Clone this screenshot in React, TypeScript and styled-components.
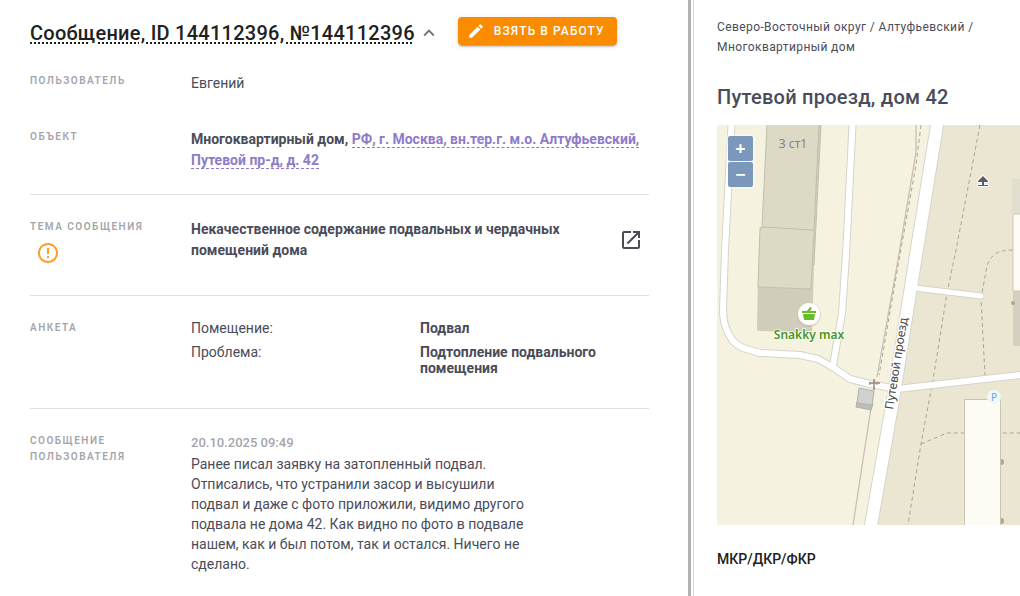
import React from 'react';
import styled, { createGlobalStyle } from 'styled-components';
import { MdEdit, MdErrorOutline, MdExpandLess, MdOpenInNew } from 'react-icons/md';

const GlobalStyle = createGlobalStyle`
  *, *::before, *::after { box-sizing: border-box; }
  body {
    margin: 0;
    background: #fff;
    color: #4a4c5a;
    font-family: Roboto, "Liberation Sans", sans-serif;
    font-size: 14px;
  }
  h1, h2, h3, p, dl, dd { margin: 0; }
`;

const Page = styled.div`
  display: grid;
  grid-template-columns: minmax(0, 688fr) minmax(0, 332fr);
  min-height: 100vh;
  overflow: hidden;
`;

const Details = styled.main`
  padding: 16px 39px 16px 30px;
`;

const Header = styled.header`
  display: flex;
  align-items: center;
  height: 34px;
  margin-bottom: 23px;
`;

const Title = styled.h1`
  font-size: 20px;
  line-height: 32px;
  font-weight: 500;
  letter-spacing: 0.0125em;
  color: #212121;
  white-space: nowrap;
  text-decoration: underline dotted 2px;
  text-underline-offset: 2px;
`;

const IconButton = styled.button<{ $size: number; $color: string }>`
  display: flex;
  flex: none;
  align-items: center;
  justify-content: center;
  width: ${(p) => p.$size}px;
  height: ${(p) => p.$size}px;
  padding: 0;
  border: 0;
  border-radius: 50%;
  background: none;
  color: ${(p) => p.$color};
  cursor: pointer;
`;

const TakeButton = styled.button`
  display: flex;
  flex: none;
  align-items: center;
  gap: 9px;
  height: 28px;
  margin: 0 0 4px 15px;
  padding: 0 12px 0 9px;
  border: 0;
  border-radius: 4px;
  background: #fb8c00;
  color: #fff;
  font: 500 12px/20px Roboto, "Liberation Sans", sans-serif;
  letter-spacing: 0.09em;
  text-transform: uppercase;
  white-space: nowrap;
  box-shadow: 0 3px 1px -2px rgba(0, 0, 0, 0.2), 0 2px 2px rgba(0, 0, 0, 0.14),
    0 1px 5px rgba(0, 0, 0, 0.12);
  cursor: pointer;
`;

const Section = styled.section`
  padding: 24px 0 23px;
  border-bottom: 1px solid #e0e0e0;

  &:first-of-type { padding-top: 0; }
  &:last-of-type { border-bottom: 0; }
`;

const Row = styled.div<{ $minHeight?: number }>`
  display: grid;
  grid-template-columns: 161px minmax(0, 1fr);
  min-height: ${(p) => p.$minHeight ?? 0}px;
`;

const Label = styled.h3`
  font-size: 10px;
  line-height: 16px;
  font-weight: 600;
  letter-spacing: 0.15em;
  text-transform: uppercase;
  color: #a4a5ac;
`;

const Value = styled.div<{ $bold?: boolean }>`
  line-height: 21px;
  font-weight: ${(p) => (p.$bold ? 700 : 400)};
`;

const AddressLink = styled.a`
  color: #8e7cc9;
  text-decoration: none;
  border-bottom: 1px dashed #8e7cc9;
`;

const Topic = styled.div`
  display: flex;
  justify-content: space-between;
  align-items: flex-start;

  ${Value} { max-width: 400px; }
  ${IconButton} { margin-top: 3px; }
`;

const Survey = styled.dl`
  padding-bottom: 1px;
`;

const SurveyItem = styled.div`
  display: grid;
  grid-template-columns: 1fr 1fr;
  padding-bottom: 8px;
  line-height: 16px;

  dd { font-weight: 700; }
`;

const Message = styled.div`
  max-width: 335px;
  line-height: 20px;

  time {
    display: block;
    font-size: 13px;
    font-weight: 500;
    color: #a4a5ac;
  }

  p { padding-top: 1px; }
`;

const Aside = styled.aside`
  display: flex;
  border-left: 3px solid #b0b0b5;
  padding-left: 2px;
`;

const AsideBody = styled.div`
  flex: 1;
  min-width: 0;
  padding: 17px 0 16px 23px;
  border-left: 1px solid #dcdcde;
`;

const Crumbs = styled.nav`
  margin-bottom: 24px;
  padding-right: 40px;
  font-size: 12px;
  line-height: 20px;
  letter-spacing: 0.0333em;
`;

const CrumbLink = styled.a`
  color: inherit;
  text-decoration: none;
`;

const ObjectTitle = styled.h2`
  margin-bottom: 12px;
  font-size: 20px;
  line-height: 32px;
  font-weight: 500;
  letter-spacing: 0.0125em;
`;

const MapBox = styled.div`
  position: relative;
  height: 400px;
  margin-bottom: 24px;
  overflow: hidden;
  background: #f5f2df;

  > svg { display: block; width: 100%; height: 100%; }
`;

const ZoomControl = styled.div`
  position: absolute;
  top: 9px;
  left: 9px;
  display: grid;
  gap: 1px;
  padding: 2px;
  border-radius: 4px;
  background: rgba(255, 255, 255, 0.4);
`;

const ZoomButton = styled.button`
  width: 25px;
  height: 25px;
  padding: 0 0 2px;
  border: 0;
  border-radius: 2px;
  background: #7b98bc;
  color: #fff;
  font: 700 18px/22px "Open Sans", sans-serif;
  cursor: pointer;
`;

const GroupTitle = styled.h3`
  font-size: 14px;
  line-height: 20px;
  font-weight: 500;
  color: #212121;
`;

const roads = [
  { d: 'M14.500 0L8 125L6 185Q6 195 9 203Q14 218 26 223L43 228L83 230L101 234L117 243L133 254L153 259L180 264L303 250', w: 6 },
  { d: 'M135.500 0L129 130L125 188L116 241', w: 6 },
  { d: 'M198 163L264 171', w: 5 },
  { d: 'M221 -6L199 130L176 275L153 406', w: 12 },
];

const footpaths = [
  'M263 0L239 125L230 168L216 255L204 319L191 400',
  'M204 319L230 308H303',
  'M296 125Q284 125 278 129Q272 134 270 141L264 173L268 250',
  'M204 0L199 40L182 135L162 250',
];

function StreetMap() {
  return (
    <svg viewBox="0 0 303 400" preserveAspectRatio="xMinYMin slice" role="img" aria-label="Карта">
      <rect width="303" height="400" fill="#f5f2df" />
      <path d="M221 0H303V400H153L176 275L199 130Z" fill="#ebe6d2" />
      <path d="M295 54H303V89H295Z" fill="#e1dfcf" />
      <path d="M43 102H97L101 0H104L97 140L95 208L42 206Q40 206 40 203L41 150Z" fill="#d1cdbb" />
      <path d="M50 0H102L97 105L45 102Z" fill="#dcd9c5" />
      <path d="M45 102L95 105Q97 105 97 107L94 164L41 162L43 104Q43 102 45 102Z" fill="#dcd9c5" />
      <g fill="none" stroke="#c3bfad">
        <path d="M50 0L45 102L95 105Q97 105 97 107L94 164L41 162L43 104Q43 102 45 102" />
        <path d="M102 0L97 106M104 0L97 140" />
      </g>
      <text x="76" y="23" textAnchor="middle" fontFamily="Noto Sans" fontSize="12" fill="#85847b">3 ст1</text>
      <path d="M199 0V27L181 135L160 252M156 270L136 400" fill="none" stroke="#c6c1b7" strokeWidth="1.300" />
      <g fill="none" stroke="#aaa592" strokeDasharray="4 3">
        {footpaths.map((d) => <path key={d} d={d} />)}
      </g>
      <g fill="none" stroke="#d5d4ce" strokeLinecap="round" strokeLinejoin="round">
        {roads.map((r) => <path key={r.d} d={r.d} strokeWidth={r.w + 2} />)}
      </g>
      <g fill="none" stroke="#fff" strokeLinecap="round" strokeLinejoin="round">
        {roads.map((r) => <path key={r.d} d={r.d} strokeWidth={r.w} />)}
      </g>
      <path d="M140 277L139 282L154 285L156 279Z" fill="#bdbdbb" stroke="#b0b0ae" />
      <path d="M142 263L157 266L155 280L140 278Z" fill="#d1d1d0" stroke="#b0b0ae" />
      <path d="M296 166H303V221H298Q296 221 296 219Z" fill="#d6cfc0" />
      <path d="M304 89H298Q296 89 296 91V166H304Z" fill="#fbfbf3" stroke="#cdc9b9" />
      <rect x="247.500" y="274.500" width="36" height="130" fill="#fcfcf4" stroke="#c9c4b4" />
      <g fill="#a9a598">
        <circle cx="296" cy="178" r="2" />
        <path d="M284 334A3 3 0 0 1 284 340ZM284 393A3 3 0 0 1 284 399Z" />
      </g>
      <g fill="none" stroke="#9a8478" strokeWidth="1.500">
        <path d="M157 254V265M152 258H163" />
        <path d="M153 257V260M160 257V260" strokeWidth="1" />
      </g>
      <g stroke="#fff" strokeWidth="2" paintOrder="stroke" fill="#5c5b60">
        <path d="M266 51L271 56V57H267V60H271V61H261V60H265V57H261V56Z" />
      </g>
      <circle cx="277" cy="272" r="7" fill="#f4f6f5" />
      <text x="277" y="276" textAnchor="middle" fontFamily="Noto Sans" fontSize="10" fill="#55aaeb">P</text>
      <circle cx="92" cy="190" r="12" fill="#bdb9a7" opacity="0.4" />
      <circle cx="92" cy="189" r="11" fill="#fff" />
      <path d="M85 186H90L93 182L95 183L93 186H99V188H85ZM86 189H98L97 195H87Z" fill="#67bd2b" />
      <g stroke="#fff" strokeLinejoin="round" paintOrder="stroke">
        <text x="92" y="214" textAnchor="middle" fontFamily="Noto Sans" fontSize="12" fontWeight="600" fill="#4a951a" strokeWidth="2" strokeOpacity="0.7">Snakky max</text>
        <text transform="translate(176 285) rotate(-81)" fontFamily="Noto Sans" fontSize="12" fill="#464646" strokeWidth="3">Путевой проезд</text>
      </g>
    </svg>
  );
}

export default function App() {
  return (
    <>
      <GlobalStyle />
      <Page>
        <Details>
          <Header>
            <Title>Сообщение, ID 144112396, №144112396</Title>
            <IconButton $size={28} $color="#757575" aria-label="Свернуть">
              <MdExpandLess size={22} />
            </IconButton>
            <TakeButton>
              <MdEdit size={18} />
              Взять в работу
            </TakeButton>
          </Header>

          <Section>
            <Row $minHeight={56}>
              <Label>Пользователь</Label>
              <Value>Евгений</Value>
            </Row>
            <Row>
              <Label>Объект</Label>
              <Value $bold>
                Многоквартирный дом,{' '}
                <AddressLink href="#address">
                  РФ, г. Москва, вн.тер.г. м.о. Алтуфьевский, Путевой пр-д, д. 42
                </AddressLink>
              </Value>
            </Row>
          </Section>

          <Section>
            <Row $minHeight={53}>
              <div>
                <Label>Тема сообщения</Label>
                <IconButton $size={36} $color="#ff9a2b" aria-label="Важно">
                  <MdErrorOutline size={24} />
                </IconButton>
              </div>
              <Topic>
                <Value $bold>Некачественное содержание подвальных и чердачных помещений дома</Value>
                <IconButton $size={36} $color="#4a4c5a" aria-label="Открыть">
                  <MdOpenInNew size={24} />
                </IconButton>
              </Topic>
            </Row>
          </Section>

          <Section>
            <Row>
              <Label>Анкета</Label>
              <Survey>
                <SurveyItem>
                  <dt>Помещение:</dt>
                  <dd>Подвал</dd>
                </SurveyItem>
                <SurveyItem>
                  <dt>Проблема:</dt>
                  <dd>Подтопление подвального помещения</dd>
                </SurveyItem>
              </Survey>
            </Row>
          </Section>

          <Section>
            <Row>
              <Label>Сообщение пользователя</Label>
              <Message>
                <time dateTime="2025-10-20T09:49">20.10.2025 09:49</time>
                <p>
                  Ранее писал заявку на затопленный подвал. Отписались, что устранили засор и высушили
                  подвал и даже с фото приложили, видимо другого подвала не дома 42. Как видно по фото в
                  подвале нашем, как и был потом, так и остался. Ничего не сделано.
                </p>
              </Message>
            </Row>
          </Section>
        </Details>

        <Aside>
          <AsideBody>
            <Crumbs aria-label="Расположение">
              <CrumbLink href="#okrug">Северо-Восточный округ</CrumbLink> /{' '}
              <CrumbLink href="#district">Алтуфьевский</CrumbLink> /{' '}
              <CrumbLink href="#type">Многоквартирный дом</CrumbLink>
            </Crumbs>
            <ObjectTitle>Путевой проезд, дом 42</ObjectTitle>
            <MapBox>
              <StreetMap />
              <ZoomControl>
                <ZoomButton aria-label="Приблизить">+</ZoomButton>
                <ZoomButton aria-label="Отдалить">−</ZoomButton>
              </ZoomControl>
            </MapBox>
            <GroupTitle>МКР/ДКР/ФКР</GroupTitle>
          </AsideBody>
        </Aside>
      </Page>
    </>
  );
}
